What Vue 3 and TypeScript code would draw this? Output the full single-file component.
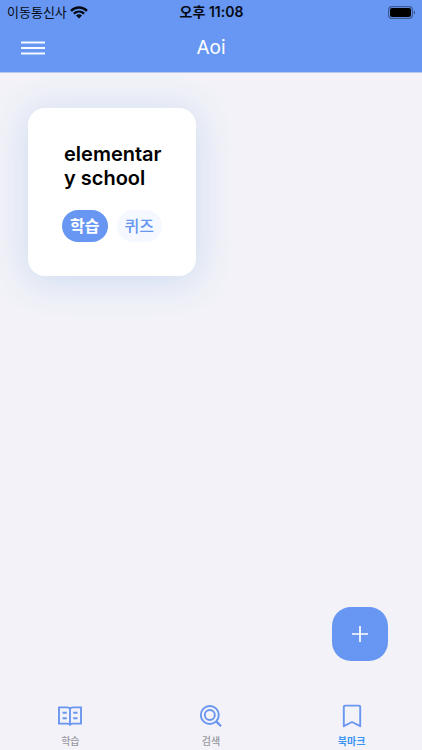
<script setup lang="ts">
import { ref } from 'vue'

type TabId = 'study' | 'search' | 'bookmark'

interface Tab {
  id: TabId
  label: string
}

const tabs: Tab[] = [
  { id: 'study', label: '학습' },
  { id: 'search', label: '검색' },
  { id: 'bookmark', label: '북마크' },
]

const activeTab = ref<TabId>('bookmark')
const decks = ref<string[]>(['elementary school'])
</script>

<template>
  <div class="screen">
    <header class="top">
      <div class="status">
        <div class="carrier">
          <span>이동통신사</span>
          <svg class="wifi" viewBox="0 0 18 13" aria-hidden="true">
            <path d="M1 4.800C5.600.4 12.400.4 17 4.800M3.900 7.700C6.900 4.900 11.100 4.900 14.100 7.700" fill="none" stroke="#050a14" stroke-width="2.400" />
            <path d="M9 12.500 6 9.500C7.800 7.900 10.200 7.900 12 9.500Z" fill="#050a14" />
          </svg>
        </div>
        <div class="clock">오후 11:08</div>
        <svg class="battery" viewBox="0 0 28 13" aria-hidden="true">
          <rect x="0.600" y="0.600" width="23.800" height="11.800" rx="3.500" fill="none" stroke="#3c5a94" stroke-width="1.200" />
          <rect x="2" y="2" width="21" height="9" rx="2" fill="#000" />
          <path d="M25.800 4.500C27.600 5.200 27.600 7.800 25.800 8.500Z" fill="#3c5a94" />
        </svg>
      </div>
      <div class="nav">
        <button class="menu" type="button" aria-label="메뉴">
          <svg viewBox="0 0 24 14" aria-hidden="true">
            <path d="M0 1.500H24M0 7H24M0 12.500H24" stroke="#f4f8ff" stroke-width="1.800" />
          </svg>
        </button>
        <h1>Aoi</h1>
      </div>
    </header>

    <main class="content">
      <article v-for="deck in decks" :key="deck" class="card">
        <h2>{{ deck }}</h2>
        <div class="actions">
          <button class="pill primary" type="button">학습</button>
          <button class="pill" type="button">퀴즈</button>
        </div>
      </article>
      <button class="add" type="button" aria-label="추가">
        <svg viewBox="0 0 16 16" aria-hidden="true">
          <path d="M8 0V16M0 8H16" stroke="#fff" stroke-width="1.700" />
        </svg>
      </button>
    </main>

    <nav class="tabs">
      <button
        v-for="tab in tabs"
        :key="tab.id"
        type="button"
        class="tab"
        :class="{ active: tab.id === activeTab }"
        @click="activeTab = tab.id"
      >
        <svg viewBox="0 0 24 24" fill="none" stroke="#6996f0" stroke-width="1.900" aria-hidden="true">
          <path
            v-if="tab.id === 'study'"
            d="M12 4.800C11.500 3.800 10.500 3.400 9 3.400H1V19.600H9C10.500 19.600 11.500 19.900 12 20.600C12.500 19.900 13.500 19.600 15 19.600H23V3.400H15C13.500 3.400 12.500 3.800 12 4.800ZM12 4.800V20.400M4.500 8.800H8.800M4.500 14.200H8.800M15.200 8.800H19.500M15.200 14.200H19.500"
          />
          <template v-else-if="tab.id === 'search'">
            <circle cx="10.800" cy="11" r="9" />
            <circle cx="10.800" cy="11" r="5" />
            <path d="M17.200 17.400 22 22.200" stroke-width="2.300" />
          </template>
          <path
            v-else
            d="M5 1.600H19Q20.200 1.600 20.200 2.800V22.200L12 18 3.800 22.200V2.800Q3.800 1.600 5 1.600Z"
            stroke-linejoin="round"
          />
        </svg>
        <span>{{ tab.label }}</span>
      </button>
    </nav>
  </div>
</template>

<style>
body {
  margin: 0;
  background: #f2f2f8;
}
</style>

<style scoped>
.screen {
  min-height: 100vh;
  display: flex;
  flex-direction: column;
  background: #f2f2f8;
  font-family: Inter, "Noto Sans CJK KR", sans-serif;
}

button {
  margin: 0;
  padding: 0;
  border: 0;
  background: none;
  font-family: inherit;
  cursor: pointer;
}

svg {
  display: block;
}

.top {
  background: #6797f2;
  border-bottom: 1px solid #b9c9ee;
}

.status {
  display: grid;
  grid-template-columns: 1fr auto 1fr;
  align-items: center;
  height: 24px;
  padding: 0 6px 0 7px;
  color: #050a14;
  font-size: 13px;
  line-height: 24px;
}

.carrier {
  display: flex;
  align-items: center;
  gap: 3px;
}

.wifi {
  width: 18px;
  height: 13px;
}

.clock {
  font-size: 14px;
  font-weight: 600;
}

.battery {
  justify-self: end;
  width: 28px;
  height: 13px;
}

.nav {
  display: grid;
  grid-template-columns: 1fr auto 1fr;
  align-items: center;
  height: 48px;
  padding: 0 21px;
}

.menu {
  justify-self: start;
}

.menu svg {
  width: 24px;
  height: 14px;
}

h1 {
  margin: 0;
  color: #fff;
  font-size: 19px;
  font-weight: 400;
  line-height: 24px;
}

.content {
  flex: 1;
  display: flex;
  flex-direction: column;
  align-items: flex-start;
  padding: 35px 34px 40px 28px;
}

.card {
  box-sizing: border-box;
  width: 168px;
  padding: 34px;
  border-radius: 17px;
  background: #fff;
  box-shadow: 0 4px 36px rgba(80, 145, 225, 0.24);
}

h2 {
  margin: 0 0 20px;
  padding-left: 2px;
  color: #000;
  font-size: 20px;
  font-weight: 600;
  line-height: 24px;
  word-break: break-all;
}

.actions {
  display: flex;
  gap: 9px;
}

.pill {
  flex: 1;
  height: 32px;
  border-radius: 16px;
  background: #f5f9ff;
  color: #6797f2;
  font-size: 16px;
  font-weight: 500;
  line-height: 32px;
}

.pill.primary {
  background: #6797f2;
  color: #fff;
  font-weight: 700;
}

.add {
  display: grid;
  place-items: center;
  align-self: flex-end;
  width: 56px;
  height: 54px;
  margin-top: auto;
  border-radius: 19px;
  background: #6797f2;
}

.add svg {
  width: 16px;
  height: 16px;
}

.tabs {
  display: grid;
  grid-template-columns: repeat(3, 1fr);
  height: 49px;
}

.tab {
  display: flex;
  flex-direction: column;
  align-items: center;
  gap: 5px;
  padding-top: 3px;
  color: #98989f;
  font-size: 10px;
  font-weight: 500;
  line-height: 16px;
}

.tab svg {
  width: 24px;
  height: 24px;
}

.tab.active {
  color: #3a94f5;
  font-weight: 700;
}
</style>
